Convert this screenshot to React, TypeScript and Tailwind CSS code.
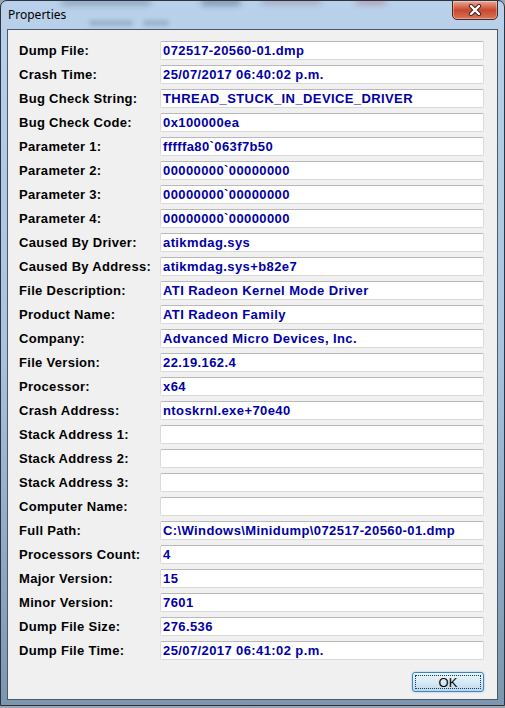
import React from 'react';

interface Field {
  label: string;
  value: string;
}

const fields: Field[] = [
  { label: 'Dump File:', value: '072517-20560-01.dmp' },
  { label: 'Crash Time:', value: '25/07/2017 06:40:02 p.m.' },
  { label: 'Bug Check String:', value: 'THREAD_STUCK_IN_DEVICE_DRIVER' },
  { label: 'Bug Check Code:', value: '0x100000ea' },
  { label: 'Parameter 1:', value: 'fffffa80`063f7b50' },
  { label: 'Parameter 2:', value: '00000000`00000000' },
  { label: 'Parameter 3:', value: '00000000`00000000' },
  { label: 'Parameter 4:', value: '00000000`00000000' },
  { label: 'Caused By Driver:', value: 'atikmdag.sys' },
  { label: 'Caused By Address:', value: 'atikmdag.sys+b82e7' },
  { label: 'File Description:', value: 'ATI Radeon Kernel Mode Driver' },
  { label: 'Product Name:', value: 'ATI Radeon Family' },
  { label: 'Company:', value: 'Advanced Micro Devices, Inc.' },
  { label: 'File Version:', value: '22.19.162.4' },
  { label: 'Processor:', value: 'x64' },
  { label: 'Crash Address:', value: 'ntoskrnl.exe+70e40' },
  { label: 'Stack Address 1:', value: '' },
  { label: 'Stack Address 2:', value: '' },
  { label: 'Stack Address 3:', value: '' },
  { label: 'Computer Name:', value: '' },
  { label: 'Full Path:', value: 'C:\\Windows\\Minidump\\072517-20560-01.dmp' },
  { label: 'Processors Count:', value: '4' },
  { label: 'Major Version:', value: '15' },
  { label: 'Minor Version:', value: '7601' },
  { label: 'Dump File Size:', value: '276.536' },
  { label: 'Dump File Time:', value: '25/07/2017 06:41:02 p.m.' },
];

const CloseGlyph = () => (
  <svg width="14" height="12" viewBox="0 0 14 12">
    <path d="M3 2 L11 10 M11 2 L3 10" stroke="#3b2320" strokeWidth="4.2" strokeLinecap="round" />
    <path d="M3 2 L11 10 M11 2 L3 10" stroke="#ffffff" strokeWidth="2.4" strokeLinecap="round" />
  </svg>
);

const PropertiesDialog: React.FC = () => {
  return (
    <div className="w-[505px] h-[708px] bg-[#9aa7b3] font-['Liberation_Sans',Arial,sans-serif]">
      <div className="relative w-[505px] h-[706px] rounded-t-[7px] border border-[#2c3440] bg-gradient-to-b from-[#b9d1ea] via-[#a9c3de] to-[#7d96b0] flex flex-col overflow-hidden">
        {/* Title bar */}
        <div className="relative h-[28px] shrink-0 flex items-center pl-[7px]">
          {/* smudges of the window behind the glass */}
          <div className="absolute left-[60px] top-[-2px] w-[90px] h-[6px] rounded-full bg-[#4a5a78] opacity-40 blur-[3px]" />
          <div className="absolute left-[200px] top-[-2px] w-[40px] h-[6px] rounded-full bg-[#3a4a68] opacity-50 blur-[3px]" />
          <div className="absolute left-[260px] top-[-2px] w-[60px] h-[5px] rounded-full bg-[#8a5a78] opacity-40 blur-[3px]" />
          <div className="absolute left-[355px] top-[-2px] w-[30px] h-[5px] rounded-full bg-[#9a3a48] opacity-40 blur-[3px]" />
          <div className="absolute left-[88px] top-[19px] w-[44px] h-[6px] rounded-full bg-[#5a6d88] opacity-30 blur-[2px]" />
          <div className="absolute left-[142px] top-[19px] w-[26px] h-[6px] rounded-full bg-[#5a6d88] opacity-30 blur-[2px]" />
          <span className="relative text-[12px] text-black font-['Noto_Sans',sans-serif] leading-none">Properties</span>
          <button className="absolute right-[6px] top-[-1px] w-[46px] h-[20px] rounded-b-[5px] border border-[#4a2620] bg-gradient-to-b from-[#e9a996] via-[#c9462c] to-[#d7745a] flex items-center justify-center shadow-[inset_0_0_0_1px_rgba(255,255,255,0.35)]">
            <CloseGlyph />
          </button>
        </div>

        {/* Client area */}
        <div className="mx-[6px] mb-[5px] flex-1 border border-[#4a5868] bg-[#f0f0f0] pt-[11px] pl-[11px] pr-[13px] flex flex-col">
          <div className="flex flex-col gap-[5px]">
            {fields.map((f) => (
              <div key={f.label} className="flex items-center h-[19px]">
                <span className="w-[141px] shrink-0 text-[13px] font-bold text-black leading-none tracking-[0.3px]">{f.label}</span>
                <div className="flex-1 h-[19px] bg-white rounded-[2px] border border-[#dadada] border-t-[#b9b9b9] flex items-center pl-[2px]">
                  <span className="text-[13px] font-bold text-[#0000a8] leading-none whitespace-nowrap tracking-[0.4px]">{f.value}</span>
                </div>
              </div>
            ))}
          </div>
          <div className="flex justify-end mt-[12px]">
            <button className="w-[72px] h-[20px] rounded-[3px] border border-[#3c86bd] bg-gradient-to-b from-[#eaf4fa] via-[#d9ebf6] to-[#bcd8ea] p-[2px] shadow-[0_0_2px_rgba(60,160,230,0.6)]">
              <div className="w-full h-full border border-dotted border-[#1f3a52] flex items-center justify-center">
                <span className="text-[13px] text-black leading-none">OK</span>
              </div>
            </button>
          </div>
        </div>
      </div>
    </div>
  );
};

export default function App() {
  return <PropertiesDialog />;
}
